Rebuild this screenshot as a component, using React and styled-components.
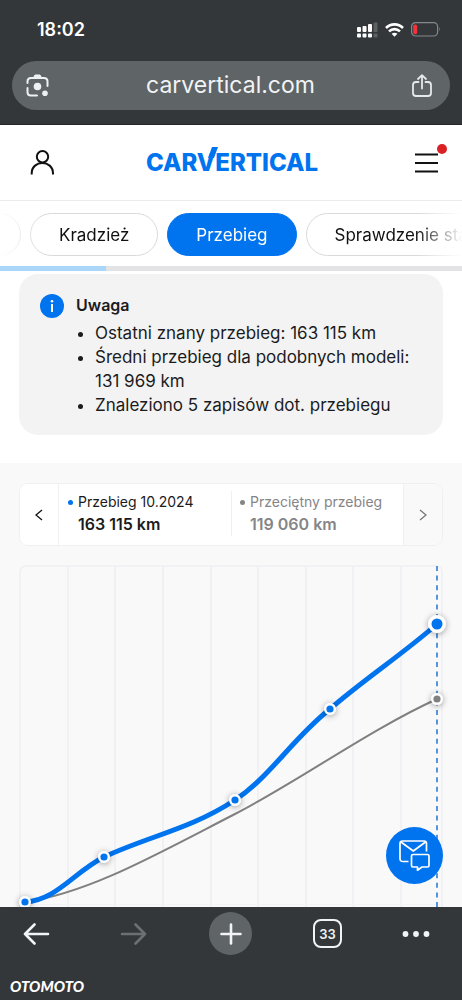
import React from 'react';
import styled, { createGlobalStyle } from 'styled-components';

const GlobalStyle = createGlobalStyle`
  *, *::before, *::after {
    box-sizing: border-box;
  }

  body {
    margin: 0;
    background: #fff;
    color: #1b1b1d;
    font-family: Inter, 'Noto Sans', sans-serif;
  }

  button {
    margin: 0;
    padding: 0;
    border: 0;
    background: none;
    color: inherit;
    font: inherit;
    cursor: pointer;
  }

  svg {
    display: block;
    flex: none;
  }
`;

// browser chrome:

const Screen = styled.div`
  display: flex;
  flex-direction: column;
  height: 100vh;
  overflow: hidden;
`;

const BrowserTop = styled.header`
  flex: none;
  padding: 0 12px 14px;
  border-bottom: 1px solid #25282a;
  background: #33373a;
  color: #fff;
`;

const StatusBar = styled.div`
  display: flex;
  align-items: center;
  justify-content: space-between;
  height: 61px;
  padding: 0 9px 2px 25px;
`;

const Clock = styled.time`
  font-size: 18px;
  font-weight: 600;
`;

const StatusIcons = styled.div`
  display: flex;
  align-items: center;
  gap: 7px;
`;

const AddressBar = styled.div`
  display: flex;
  align-items: center;
  justify-content: space-between;
  height: 49px;
  padding: 0 18px 0 14px;
  border-radius: 25px;
  background: #5f6467;
`;

const Address = styled.button`
  flex: 1;
  padding-bottom: 2px;
  color: #f1f3f4;
  font-size: 23px;
  line-height: 28px;
`;

const BrowserBottom = styled.footer`
  flex: none;
  height: 93px;
  background: #33373a;
  color: #f1f3f4;
`;

const BrowserNav = styled.nav`
  display: grid;
  grid-template-columns: repeat(4, 97fr) 79fr;
  align-items: center;
  justify-items: center;
  height: 53px;
  margin: 0 7px 0 -12px;
`;

const NavButton = styled.button`
  display: grid;
  place-items: center;
  width: 43px;
  height: 43px;
  border-radius: 50%;
  background: ${(props) => (props.$filled ? '#5f6467' : 'transparent')};

  &:disabled {
    color: #6c7073;
  }
`;

const TabCount = styled.span`
  display: grid;
  place-items: center;
  width: 29px;
  height: 29px;
  border: 2px solid #f1f3f4;
  border-radius: 8px;
  font-size: 13px;
  font-weight: 600;
`;

const Watermark = styled.div`
  padding: 17px 10px 0;
  color: #fff;
  font-family: Lato, sans-serif;
  font-size: 15px;
  font-weight: 900;
  font-style: italic;
  line-height: 18px;
`;

// site header:

const Page = styled.main`
  flex: 1;
  min-height: 0;
  overflow: hidden;
`;

const SiteHeader = styled.div`
  display: flex;
  align-items: center;
  justify-content: space-between;
  height: 76px;
  padding: 0 16px 0 26px;
  border-bottom: 1px solid #ebebed;
`;

const IconButton = styled.button`
  display: grid;
  place-items: center;
  width: 32px;
  height: 32px;
  color: #111;
`;

const MenuButton = styled(IconButton)`
  position: relative;
  width: 40px;
`;

const AlertDot = styled.span`
  position: absolute;
  top: -3px;
  right: -1px;
  width: 10px;
  height: 10px;
  border-radius: 50%;
  background: #d92126;
`;

const Logo = styled.a`
  color: #0073ef;
  font-size: 24px;
  font-weight: 800;
  line-height: 28px;
  text-decoration: none;
`;

const LogoTick = styled.span`
  position: relative;

  &::after {
    content: '';
    position: absolute;
    top: -1px;
    right: -1px;
    width: 6px;
    height: 11px;
    background: currentColor;
    transform: skewX(-20deg);
  }
`;

const Tabs = styled.nav`
  display: flex;
  gap: 9px;
  height: 65px;
  padding: 12px 0 10px;
  overflow: hidden;
  mask-image: linear-gradient(to right, transparent, #000 40px, #000 calc(100% - 46px), transparent);
`;

const Tab = styled.button`
  flex: none;
  height: 43px;
  padding: 0 28px;
  border: 1px solid ${(props) => (props.$active ? '#0073ef' : '#d9d9db')};
  border-radius: 22px;
  background: ${(props) => (props.$active ? '#0073ef' : '#fff')};
  color: ${(props) => (props.$active ? '#fff' : '#111')};
  font-size: 17px;
  white-space: nowrap;

  &:first-child {
    margin-left: -37px;
  }
`;

const Progress = styled.div`
  height: 5px;
  background: #e3e3e5;
`;

const ProgressFill = styled.div`
  height: 100%;
  background: #a9d6f9;
`;

// notice:

const Notice = styled.section`
  display: flex;
  gap: 12px;
  margin: 3px 19px 28px;
  padding: 20px 21px 18px;
  border-radius: 19px;
  background: #f3f3f3;
`;

const NoticeTitle = styled.h2`
  margin: 0 0 5px;
  font-size: 16px;
  font-weight: 600;
  line-height: 22px;
`;

const NoticeList = styled.ul`
  margin: 0;
  padding-left: 19px;
  font-size: 17px;
  line-height: 24px;
`;

// mileage:

const Mileage = styled.section`
  padding: 20px 19px 0;
  background: #f9f9f9;
`;

const Stepper = styled.div`
  display: flex;
  height: 63px;
  border: 1px solid #f0f0f2;
  border-radius: 9px;
  background: #fff;
  overflow: hidden;
`;

const StepButton = styled.button`
  display: grid;
  flex: none;
  place-items: center;
  width: 39px;
  border: 0 solid #f0f0f2;
  border-right-width: ${(props) => (props.disabled ? 0 : '1px')};
  border-left-width: ${(props) => (props.disabled ? '1px' : 0)};
  background: ${(props) => (props.disabled ? '#f9f9f9' : '#fff')};
  color: ${(props) => (props.disabled ? '#77777a' : '#111')};
`;

const Readings = styled.dl`
  display: grid;
  flex: 1;
  grid-template-columns: 1fr 1fr;
  margin: 0;
`;

const Reading = styled.div`
  margin: 7px 0 9px;
  padding-left: ${(props) => (props.$muted ? '18px' : '19px')};
  border-left: ${(props) => (props.$muted ? '1px solid #f0f0f2' : 0)};
  color: ${(props) => (props.$muted ? '#858587' : '#1b1b1d')};
  white-space: nowrap;
`;

const ReadingLabel = styled.dt`
  display: flex;
  align-items: center;
  gap: 5px;
  margin-left: -10px;
  font-size: 14px;
  line-height: 22px;

  &::before {
    content: '';
    width: 5px;
    height: 5px;
    border-radius: 50%;
    background: ${(props) => props.$dot};
  }
`;

const ReadingValue = styled.dd`
  margin: 0;
  font-size: 16px;
  font-weight: 600;
  line-height: 22px;
`;

const Chart = styled.svg`
  width: 100%;
  height: auto;
  margin-top: 19px;
  overflow: visible;
`;

const ChatButton = styled.button`
  position: fixed;
  right: 19px;
  bottom: 116px;
  display: grid;
  place-items: center;
  width: 57px;
  height: 57px;
  border-radius: 50%;
  background: #0073ef;
  color: #fff;
`;

// data:

const tabs = ['Kradzież', 'Przebieg', 'Sprawdzenie stanu'];

const notes = [
  'Ostatni znany przebieg: 163\u00a0115\u00a0km',
  'Średni przebieg dla podobnych modeli: 131\u00a0969\u00a0km',
  'Znaleziono 5 zapisów dot. przebiegu',
];

const gridLines = [49, 96, 144, 192, 239, 287, 334, 382];

const points = [
  { x: 6, y: 337 },
  { x: 85, y: 292 },
  { x: 216, y: 235 },
  { x: 311, y: 144 },
];

// icons:

const SignalIcon = () => (
  <svg width="21" height="16" viewBox="0 0 21 16" fill="#fff">
    <rect x="0" y="5" width="4" height="5" rx="1" />
    <rect x="5.5" y="4" width="4" height="6" rx="1" />
    <rect x="11" y="2" width="4" height="8" rx="1" />
    <rect x="16.5" y="0.5" width="4" height="9.5" rx="1" fill="#5d6164" />
    <rect x="0" y="11.5" width="4" height="4" rx="1" />
    <rect x="5.5" y="11.5" width="4" height="4" rx="1" />
    <rect x="11" y="11.5" width="4" height="4" rx="1" />
    <rect x="16.5" y="11.5" width="4" height="4" rx="1" fill="#5d6164" />
  </svg>
);

const WifiIcon = () => (
  <svg width="19" height="14" viewBox="0 0 19 14" fill="none" stroke="#fff" strokeWidth="2.6">
    <path d="M1 5 C5.8 0.2 13.2 0.2 18 5" />
    <path d="M4 8.4 C7.2 5.4 11.8 5.4 15 8.4" />
    <path d="M6.6 10.8 C8.3 9.3 10.7 9.3 12.4 10.8 L9.5 13.8 Z" fill="#fff" stroke="none" />
  </svg>
);

const BatteryIcon = () => (
  <svg width="30" height="15" viewBox="0 0 30 15" fill="none">
    <rect x="0.6" y="0.6" width="26" height="13.4" rx="4" stroke="#85898b" strokeWidth="1.2" />
    <rect x="2.2" y="2.4" width="4" height="9.8" rx="1.8" fill="#f5313a" />
    <path d="M28 5 Q29.6 7.3 28 9.6 Z" fill="#85898b" />
  </svg>
);

const LensIcon = () => (
  <svg width="23" height="23" viewBox="0 0 23 23" fill="none" stroke="#eef0f1" strokeWidth="2" strokeLinecap="round">
    <path d="M1.5 9 V7.5 Q1.5 4 5 4 H18 Q21.5 4 21.5 7.5 V12" />
    <path d="M1.5 14 V18 Q1.5 21.5 5 21.5 H11" />
    <path d="M7.5 3.5 L9 1 H14 L15.5 3.5 Z" fill="#eef0f1" strokeWidth="1" />
    <circle cx="11.5" cy="12.5" r="3.8" fill="#eef0f1" stroke="none" />
    <circle cx="19" cy="19.2" r="2.8" fill="#eef0f1" stroke="none" />
  </svg>
);

const ShareIcon = () => (
  <svg width="20" height="24" viewBox="0 0 20 24" fill="none" stroke="#e6e8e9" strokeWidth="1.8" strokeLinecap="round" strokeLinejoin="round">
    <path d="M6.5 8 H4 Q1 8 1 11 V19 Q1 22 4 22 H16 Q19 22 19 19 V11 Q19 8 16 8 H13.5" />
    <path d="M10 14.5 V1.5 M6 5 L10 1.2 L14 5" />
  </svg>
);

const UserIcon = () => (
  <svg width="24" height="26" viewBox="0 0 24 26" fill="none" stroke="currentColor" strokeWidth="2">
    <circle cx="12.5" cy="6.7" r="5.7" />
    <path d="M1.7 24.5 V23.5 C1.7 9.5 23 9.5 23 23.5 V24.5" />
  </svg>
);

const MenuIcon = () => (
  <svg width="23" height="20" viewBox="0 0 23 20" stroke="currentColor" strokeWidth="2">
    <path d="M0 1.5 H23 M0 10 H23 M0 18.5 H23" />
  </svg>
);

const InfoIcon = () => (
  <svg width="24" height="24" viewBox="0 0 24 24">
    <circle cx="12" cy="12" r="12" fill="#0073ef" />
    <path d="M12 10 V18" stroke="#fff" strokeWidth="2" />
    <circle cx="12" cy="7.2" r="1.3" fill="#fff" />
  </svg>
);

const ChevronIcon = ({ d }) => (
  <svg width="8" height="12" viewBox="0 0 8 12" fill="none" stroke="currentColor" strokeWidth="1.3">
    <path d={d} />
  </svg>
);

const ArrowIcon = ({ d }) => (
  <svg width="27" height="22" viewBox="0 0 27 22" fill="none" stroke="currentColor" strokeWidth="2.6" strokeLinecap="round" strokeLinejoin="round">
    <path d={d} />
  </svg>
);

const ChatIcon = () => (
  <svg width="31" height="31" viewBox="0 0 31 31" fill="none" stroke="currentColor" strokeWidth="1.7" strokeLinejoin="round">
    <path d="M9.5 21.5 H4 Q1 21.5 1 18.5 V3.5 Q1 1 3.5 1 H25 Q27.5 1 27.5 3.5 V11.5" />
    <path d="M2 2 L14.3 11 L26.5 2" />
    <path d="M14 14.5 H28.5 Q30 14.5 30 16 V25.5 Q30 27 28.5 27 H23 L18.5 30.2 V27 H14 Q12.5 27 12.5 25.5 V16 Q12.5 14.5 14 14.5 Z" />
  </svg>
);

// charts:

const MileageChart = () => (
  <Chart viewBox="0 0 424 342" role="img" aria-label="Wykres przebiegu">
    <defs>
      <filter id="shadow" x="-100%" y="-100%" width="300%" height="300%">
        <feDropShadow dx="0" dy="1" stdDeviation="3" floodColor="#000" floodOpacity="0.4" />
      </filter>
    </defs>
    <path d="M1 342 V8 Q1 1 8 1 H417 Q423 1 423 7 V342" fill="none" stroke="#f0f0f3" strokeWidth="1.5" />
    {gridLines.map((x) => (
      <path key={x} d={`M${x} 1 V342`} stroke="#eeeef3" strokeWidth="1.5" />
    ))}
    <path d="M0 339.5 H423" stroke="#f3f3f5" />
    <path d="M418 1 V342" stroke="#2f7bd0" strokeWidth="1.6" strokeDasharray="5 4.6" />
    <path
      d="M6 337 C70 328 138 289 216 249 C280 216 350 165 418 134"
      fill="none"
      stroke="#808080"
      strokeWidth="2"
    />
    <path
      d="M6 337 C38 335 55 307 85 292 C130 271 172 264 216 235 C252 211 273 174 311 144 C344 115 384 89 418 59"
      fill="none"
      stroke="#0073ef"
      strokeWidth="5"
    />
    {points.map((point) => (
      <circle key={point.x} cx={point.x} cy={point.y} r="4.8" fill="#0073ef" stroke="#fff" strokeWidth="2.4" filter="url(#shadow)" />
    ))}
    <circle cx="418" cy="134" r="4.8" fill="#808080" stroke="#fff" strokeWidth="2.4" filter="url(#shadow)" />
    <circle cx="418" cy="59" r="7.2" fill="#0073ef" stroke="#fff" strokeWidth="3.4" filter="url(#shadow)" />
  </Chart>
);

// react:

const App = () => (
  <Screen>
    <GlobalStyle />
    <BrowserTop>
      <StatusBar>
        <Clock>18:02</Clock>
        <StatusIcons>
          <SignalIcon />
          <WifiIcon />
          <BatteryIcon />
        </StatusIcons>
      </StatusBar>
      <AddressBar>
        <button type="button" aria-label="Obiektyw"><LensIcon /></button>
        <Address type="button">carvertical.com</Address>
        <button type="button" aria-label="Udostępnij"><ShareIcon /></button>
      </AddressBar>
    </BrowserTop>

    <Page>
      <SiteHeader>
        <IconButton type="button" aria-label="Konto"><UserIcon /></IconButton>
        <Logo href="#">CAR<LogoTick>V</LogoTick>ERTICAL</Logo>
        <MenuButton type="button" aria-label="Menu">
          <MenuIcon />
          <AlertDot />
        </MenuButton>
      </SiteHeader>
      <Tabs>
        <Tab type="button" aria-label="Poprzednia sekcja" />
        {tabs.map((tab) => (
          <Tab key={tab} type="button" $active={tab === 'Przebieg'}>{tab}</Tab>
        ))}
      </Tabs>
      <Progress>
        <ProgressFill style={{ width: '23%' }} />
      </Progress>

      <Notice>
        <InfoIcon />
        <div>
          <NoticeTitle>Uwaga</NoticeTitle>
          <NoticeList>
            {notes.map((note) => <li key={note}>{note}</li>)}
          </NoticeList>
        </div>
      </Notice>

      <Mileage>
        <Stepper>
          <StepButton type="button" aria-label="Poprzedni"><ChevronIcon d="M7 1 L1 6 L7 11" /></StepButton>
          <Readings>
            <Reading>
              <ReadingLabel $dot="#0073ef">Przebieg 10.2024</ReadingLabel>
              <ReadingValue>163 115 km</ReadingValue>
            </Reading>
            <Reading $muted>
              <ReadingLabel $dot="#858587">Przeciętny przebieg</ReadingLabel>
              <ReadingValue>119 060 km</ReadingValue>
            </Reading>
          </Readings>
          <StepButton type="button" aria-label="Następny" disabled><ChevronIcon d="M1 1 L7 6 L1 11" /></StepButton>
        </Stepper>
        <MileageChart />
      </Mileage>
      <ChatButton type="button" aria-label="Czat"><ChatIcon /></ChatButton>
    </Page>

    <BrowserBottom>
      <BrowserNav>
        <NavButton type="button" aria-label="Wstecz"><ArrowIcon d="M25 11 H2 M11.5 1.5 L2 11 L11.5 20.5" /></NavButton>
        <NavButton type="button" aria-label="Dalej" disabled><ArrowIcon d="M2 11 H25 M15.5 1.5 L25 11 L15.5 20.5" /></NavButton>
        <NavButton type="button" aria-label="Nowa karta" $filled>
          <svg width="22" height="22" viewBox="0 0 22 22" stroke="currentColor" strokeWidth="2.6" strokeLinecap="round">
            <path d="M11 1.5 V20.5 M1.5 11 H20.5" />
          </svg>
        </NavButton>
        <NavButton type="button"><TabCount>33</TabCount></NavButton>
        <NavButton type="button" aria-label="Więcej">
          <svg width="28" height="6" viewBox="0 0 28 6" fill="currentColor">
            <circle cx="3.5" cy="3" r="2.9" />
            <circle cx="14" cy="3" r="2.9" />
            <circle cx="24.5" cy="3" r="2.9" />
          </svg>
        </NavButton>
      </BrowserNav>
      <Watermark>OTOMOTO</Watermark>
    </BrowserBottom>
  </Screen>
);

export default App;
